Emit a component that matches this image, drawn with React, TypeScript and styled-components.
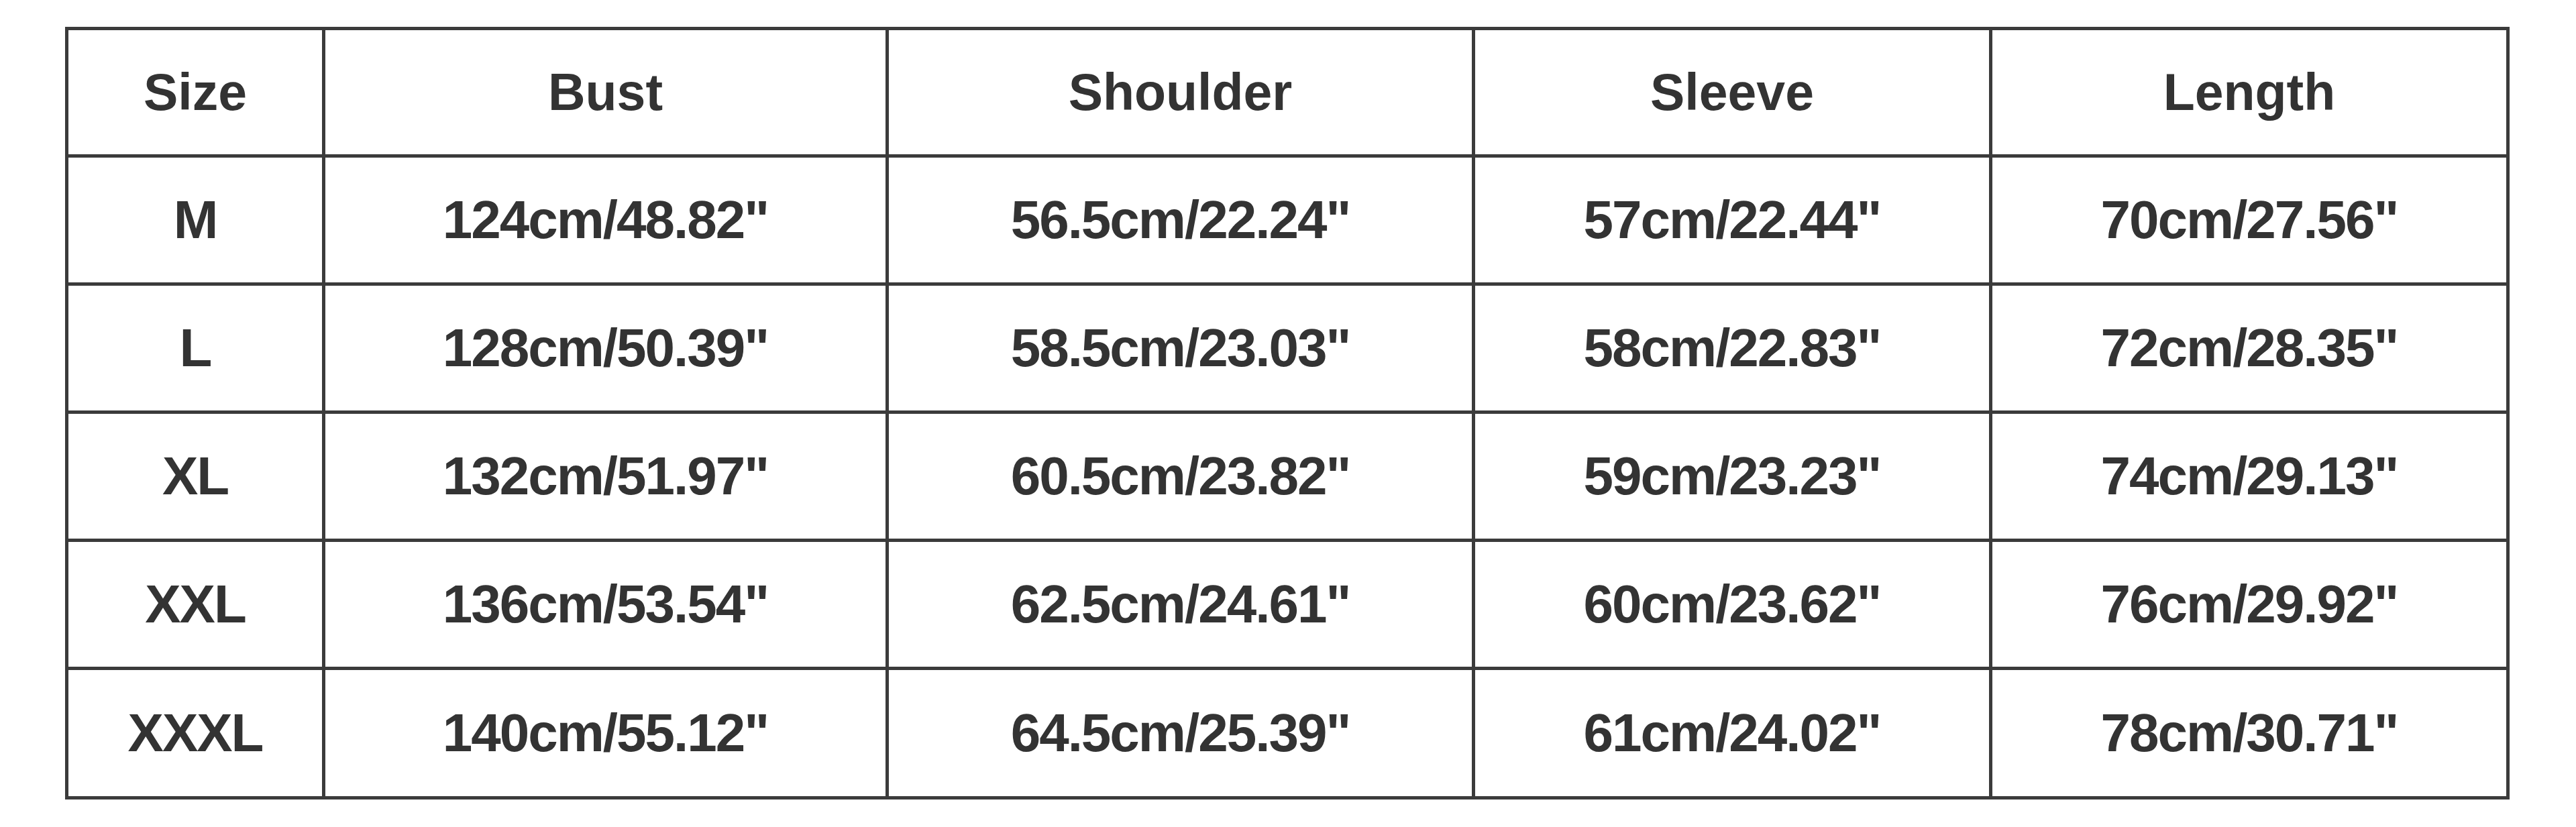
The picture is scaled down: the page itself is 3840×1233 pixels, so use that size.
import styled, { createGlobalStyle } from "styled-components"

const GlobalStyle = createGlobalStyle`
  html, body {
    margin: 0;
    padding: 0;
    background: #ffffff;
  }
  body {
    font-family: "Liberation Sans", Arial, sans-serif;
    color: #333333;
  }
`

const Page = styled.div`
  width: 3840px;
  height: 1233px;
  padding: 40px 0 0 97px;
  box-sizing: border-box;
  background: #ffffff;
`

// the grid lines are the dark background showing through the gaps
const Chart = styled.div`
  display: inline-grid;
  grid-template-columns: 378px 835px 869px 766px 766px;
  grid-template-rows: 185px repeat(4, 186px) 188px;
  gap: 5px;
  padding: 5px;
  background: #3b3b3b;
`

const Row = styled.div`
  display: contents;
`

const HeadCell = styled.div`
  display: flex;
  align-items: center;
  justify-content: center;
  background: #ffffff;
  font-size: 77px;
  font-weight: 700;
  color: #333333;
`

const Cell = styled.div`
  display: flex;
  align-items: center;
  justify-content: center;
  background: #ffffff;
  font-size: 80px;
  font-weight: 700;
  letter-spacing: -2px;
  color: #333333;
`

const columns = ["Size", "Bust", "Shoulder", "Sleeve", "Length"]

const sizes = [
  ["M", "124cm/48.82\"", "56.5cm/22.24\"", "57cm/22.44\"", "70cm/27.56\""],
  ["L", "128cm/50.39\"", "58.5cm/23.03\"", "58cm/22.83\"", "72cm/28.35\""],
  ["XL", "132cm/51.97\"", "60.5cm/23.82\"", "59cm/23.23\"", "74cm/29.13\""],
  ["XXL", "136cm/53.54\"", "62.5cm/24.61\"", "60cm/23.62\"", "76cm/29.92\""],
  ["XXXL", "140cm/55.12\"", "64.5cm/25.39\"", "61cm/24.02\"", "78cm/30.71\""],
]

export default function App() {
  return (
    <Page>
      <GlobalStyle />
      <Chart>
        <Row>
          {columns.map((c) => (
            <HeadCell key={c}>{c}</HeadCell>
          ))}
        </Row>
        {sizes.map((row) => (
          <Row key={row[0]}>
            {row.map((v, i) => (
              <Cell key={i}>{v}</Cell>
            ))}
          </Row>
        ))}
      </Chart>
    </Page>
  )
}
